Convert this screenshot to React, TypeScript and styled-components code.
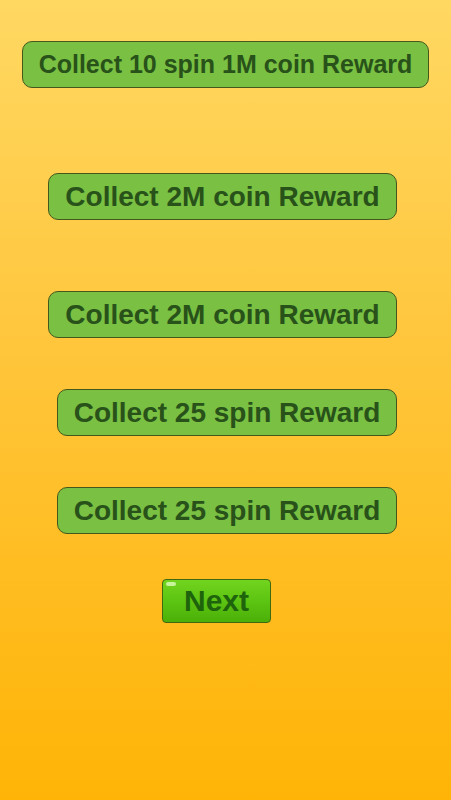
import React from "react";
import styled, { createGlobalStyle } from "styled-components";

const Global = createGlobalStyle`
  html, body { margin: 0; padding: 0; }
  body { font-family: "Liberation Sans", Arial, sans-serif; }
`;

const Page = styled.div`
  width: 451px;
  height: 800px;
  background: linear-gradient(180deg, #ffd862 0%, #ffc53a 45%, #ffb406 100%);
  display: flex;
  flex-direction: column;
  align-items: flex-start;
  padding-top: 41px;
  box-sizing: border-box;
`;

const Reward = styled.button<{ $left: number; $width: number; $top: number; $size: number }>`
  margin-top: ${(p) => p.$top}px;
  margin-left: ${(p) => p.$left}px;
  width: ${(p) => p.$width}px;
  height: 47px;
  box-sizing: border-box;
  background: #79c043;
  border: 1px solid #45581c;
  border-radius: 10px;
  color: #285219;
  font-family: "Liberation Sans", Arial, sans-serif;
  font-weight: 700;
  font-size: ${(p) => p.$size}px;
  display: flex;
  align-items: center;
  justify-content: center;
  padding: 0;
`;

const Next = styled.button`
  margin-top: 45px;
  margin-left: 162px;
  width: 109px;
  height: 44px;
  box-sizing: border-box;
  position: relative;
  background: linear-gradient(180deg, #72d41e 0%, #5cc412 50%, #4cb008 100%);
  border: 1px solid #3f6a12;
  border-radius: 4px;
  color: #1e640c;
  font-family: "Liberation Sans", Arial, sans-serif;
  font-weight: 700;
  font-size: 30px;
  display: flex;
  align-items: center;
  justify-content: center;
  padding: 0;
`;

const Shine = styled.span`
  position: absolute;
  left: 3px;
  top: 2px;
  width: 10px;
  height: 4px;
  border-radius: 3px;
  background: rgba(230, 255, 200, 0.75);
`;

const rewards = [
  { text: "Collect 10 spin 1M coin Reward", left: 22, width: 407, top: 0, size: 25 },
  { text: "Collect 2M coin Reward", left: 48, width: 349, top: 85, size: 28 },
  { text: "Collect 2M coin Reward", left: 48, width: 349, top: 71, size: 28 },
  { text: "Collect 25 spin Reward", left: 57, width: 340, top: 51, size: 28 },
  { text: "Collect 25 spin Reward", left: 57, width: 340, top: 51, size: 28 },
];

export default function App() {
  return (
    <>
      <Global />
      <Page>
        {rewards.map((r, i) => (
          <Reward key={i} $left={r.left} $width={r.width} $top={r.top} $size={r.size}>
            {r.text}
          </Reward>
        ))}
        <Next>
          <Shine />
          Next
        </Next>
      </Page>
    </>
  );
}
